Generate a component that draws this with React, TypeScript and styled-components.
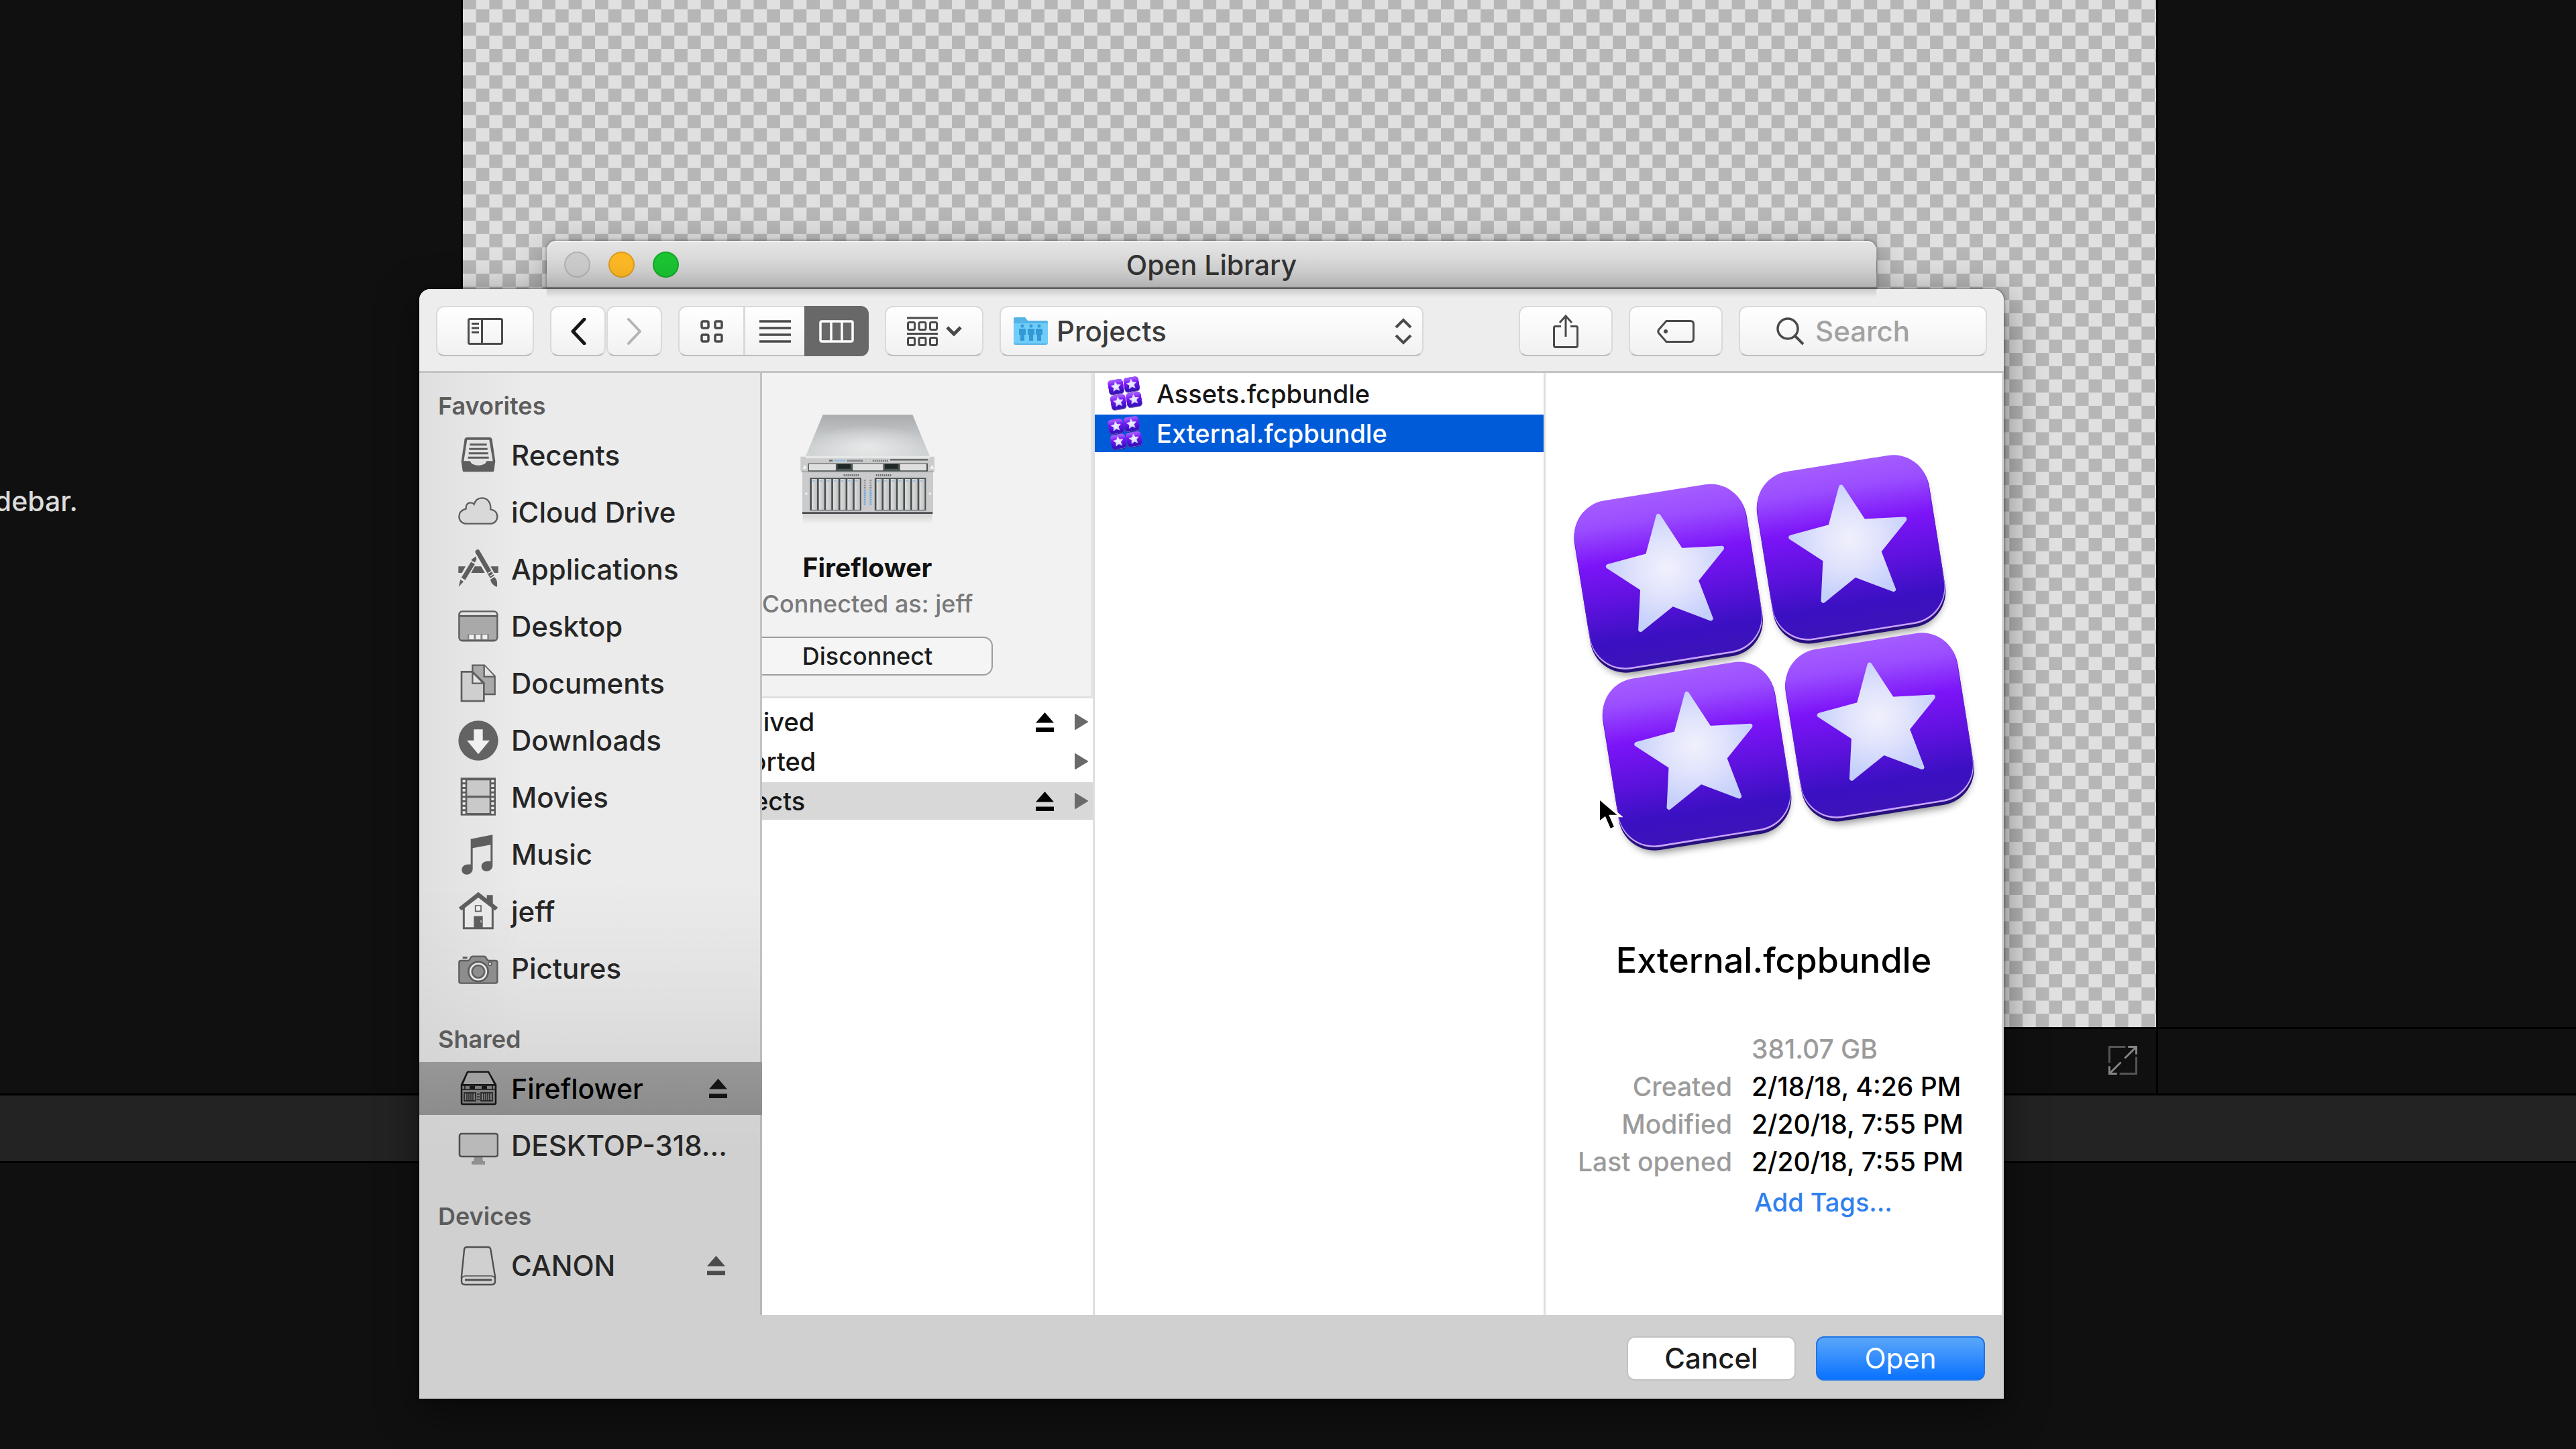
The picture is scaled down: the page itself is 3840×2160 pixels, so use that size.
import React from "react";
import styled, { createGlobalStyle, css } from "styled-components";

const GlobalStyle = createGlobalStyle`
  * { box-sizing: border-box; }
  html, body { margin: 0; padding: 0; background: #101010; }
  body { font-family: Inter, "Liberation Sans", sans-serif; color: #1c1c1c; overflow: hidden; }
  button, input, select { font: inherit; color: inherit; margin: 0; }
  ul, dl, dd, h1, h2, h3, p { margin: 0; padding: 0; }
  ul { list-style: none; }
  svg { display: block; flex: none; }
`;

/* ---------- Editor behind the dialog ---------- */

const Editor = styled.main`
  position: relative;
  display: grid;
  grid-template-columns: 690px 1fr 626px;
  grid-template-rows: 1fr 99px 101px 429px;
  height: 100vh;
  min-height: 2160px;
  overflow: hidden;
  background: #101010;
`;

const BrowserPane = styled.section`
  grid-row: 1 / 3;
  border-right: 3px solid #000;
  padding-top: 721px;
`;

const BrowserHint = styled.p`
  display: flex;
  justify-content: flex-end;
  width: 116px;
  overflow: hidden;
  white-space: nowrap;
  font-size: 41px;
  line-height: 52px;
  font-weight: 450;
  color: #dcdcdc;
`;

const Canvas = styled.section`
  min-width: 0;
  min-height: 0;
  overflow: hidden;
  background: #e0e0e0;
`;

const InspectorPane = styled.section`
  border-left: 3px solid #000;
`;

const ViewerBar = styled.div`
  grid-column: 2;
  display: flex;
  align-items: center;
  justify-content: flex-end;
  border-top: 3px solid #000;
  padding: 0 28px 4px 0;
`;

const InspectorBar = styled.div`
  border-top: 3px solid #000;
  border-left: 3px solid #000;
`;

const TimelineHeader = styled.div`
  grid-column: 1 / -1;
  border-top: 3px solid #000;
  background: #232323;
`;

const Timeline = styled.div`
  grid-column: 1 / -1;
  border-top: 3px solid #000;
`;

const BareButton = styled.button`
  display: flex;
  align-items: center;
  justify-content: center;
  padding: 0;
  border: 0;
  background: none;
`;

/* ---------- Dialog windows ---------- */

const DialogStack = styled.div`
  position: absolute;
  top: 359px;
  left: 625px;
  right: 853px;
  display: flex;
  flex-direction: column;
`;

const TitleBar = styled.header`
  display: grid;
  grid-template-columns: 1fr auto 1fr;
  align-items: center;
  height: 72px;
  margin: 0 190px;
  padding: 0 26px;
  border-radius: 14px 14px 0 0;
  border-top: 2px solid #f2f2f2;
  border-bottom: 3px solid #8c8c8c;
  background: linear-gradient(#e4e4e4, #cacaca);
  box-shadow: 0 0 4px rgba(0, 0, 0, 0.5), 0 10px 50px rgba(0, 0, 0, 0.3);
`;

const Lights = styled.div`
  display: flex;
  gap: 27px;
`;

const Light = styled.button<{ $fill: string; $edge: string }>`
  width: 39px;
  height: 39px;
  padding: 0;
  border: 2px solid ${(p) => p.$edge};
  border-radius: 50%;
  background: ${(p) => p.$fill};
`;

const Title = styled.h1`
  font-size: 41px;
  line-height: 52px;
  font-weight: 450;
  color: #333;
`;

const Sheet = styled.section`
  position: relative;
  border-radius: 16px 16px 0 0;
  background: #d0d0d0;
  box-shadow: 0 0 4px rgba(0, 0, 0, 0.6), 0 16px 60px rgba(0, 0, 0, 0.5);
`;

const Toolbar = styled.div`
  display: flex;
  align-items: center;
  gap: 24px;
  height: 125px;
  padding: 3px 25px 0;
  border-radius: 16px 16px 0 0;
  border-bottom: 3px solid #c4c4c4;
  background: linear-gradient(rgba(0, 0, 0, 0.14), rgba(0, 0, 0, 0)) 190px 0 / 1982px 13px no-repeat #ededed;
`;

const chrome = css`
  height: 75px;
  border: 2px solid #d9d9d9;
  border-bottom-color: #bdbdbd;
  border-radius: 12px;
  background: linear-gradient(#fff, #f1f1f1);
`;

const ToolButton = styled.button<{ $width: number }>`
  ${chrome}
  display: flex;
  align-items: center;
  justify-content: center;
  gap: 12px;
  width: ${(p) => p.$width}px;
  padding: 0;
`;

const NavGroup = styled.div`
  display: flex;
  gap: 1px;
`;

const ViewSwitch = styled.div`
  ${chrome}
  display: grid;
  grid-template-columns: 95px 91px 1fr;
  width: 284px;
  padding: 0;
`;

const ViewOption = styled(BareButton)<{ $active?: boolean }>`
  & + & { border-left: 3px solid #d9d9d9; }
  ${(p) =>
    p.$active &&
    css`
      && { border-left: 0; }
      margin: -2px -2px -2px 0;
      border-radius: 0 12px 12px 0;
      background: #686868;
    `}
`;

const FolderField = styled.label`
  ${chrome}
  display: grid;
  grid-template-columns: 51px 1fr 26px;
  align-items: center;
  gap: 13px;
  width: 632px;
  margin-right: auto;
  padding: 0 15px 0 19px;
`;

const FolderSelect = styled.select`
  appearance: none;
  height: 71px;
  padding: 0;
  border: 0;
  background: none;
  font-size: 42px;
  font-weight: 450;
  color: #3c3c3c;
`;

const SearchField = styled.label`
  ${chrome}
  display: flex;
  align-items: center;
  gap: 16px;
  width: 370px;
  padding-left: 54px;
`;

const SearchInput = styled.input`
  width: 100%;
  min-width: 0;
  height: 71px;
  padding: 0;
  border: 0;
  background: none;
  font-size: 42px;
  font-weight: 450;
  &::placeholder { color: #a2a2a2; opacity: 1; }
`;

/* ---------- Dialog body ---------- */

const Body = styled.div`
  display: grid;
  grid-template-columns: 511px 496px 672px 1fr;
`;

const Sidebar = styled.nav`
  padding-bottom: 34px;
  border-right: 3px solid rgba(0, 0, 0, 0.12);
  background:
    linear-gradient(
      rgba(208, 208, 208, 0) 54%,
      rgba(208, 208, 208, 0.3) 64%,
      rgba(208, 208, 208, 0.7) 74%,
      #d0d0d0 82%
    ),
    linear-gradient(90deg, rgba(0, 0, 0, 0.05), rgba(0, 0, 0, 0) 30%),
    #ebebeb;
`;

const SideSection = styled.section`
  & + & { margin-top: 17px; }
`;

const SideHeading = styled.h2`
  padding: 24px 28px 9px;
  font-size: 36px;
  line-height: 50px;
  font-weight: 600;
  color: #5c5c5c;
`;

const SideList = styled.ul`
  display: grid;
  gap: 6px;
`;

const SideRow = styled.li<{ $selected?: boolean }>`
  display: flex;
  align-items: center;
  height: 79px;
  padding: 0 52px 0 58px;
  background: ${(p) => (p.$selected ? "linear-gradient(#979797, #8c8c8c)" : "none")};
`;

const SideLink = styled.button<{ $strong?: boolean }>`
  display: flex;
  align-items: center;
  gap: 19px;
  flex: 1;
  padding: 0;
  border: 0;
  background: none;
  white-space: nowrap;
  text-align: left;
  font-size: ${(p) => (p.$strong ? 41 : 42)}px;
  line-height: 52px;
  font-weight: ${(p) => (p.$strong ? 500 : 450)};
  color: ${(p) => (p.$strong ? "#000" : "#262626")};
`;

const Column = styled.div`
  display: flex;
  justify-content: flex-end;
  overflow: hidden;
  border-right: 3px solid #dedede;
  background: #fff;
`;

const ColumnInner = styled.div`
  flex: 0 0 669px;
`;

const ServerCard = styled.div`
  display: flex;
  flex-direction: column;
  align-items: center;
  padding: 60px 0 31px;
  border-bottom: 3px solid #e0e0e0;
  border-right: 3px solid #e4e4e4;
  background: #f2f2f2;
`;

const ServerName = styled.h2`
  margin-top: 29px;
  font-size: 39px;
  line-height: 54px;
  font-weight: 700;
  color: #111;
`;

const ServerNote = styled.p`
  font-size: 36px;
  line-height: 54px;
  font-weight: 500;
  color: #7a7a7a;
`;

const DisconnectButton = styled.button`
  width: 373px;
  height: 58px;
  margin-top: 22px;
  padding: 0;
  border: 2px solid #9d9d9d;
  border-radius: 14px;
  background: #f5f5f5;
  font-size: 36px;
  font-weight: 500;
`;

const FileList = styled.ul<{ $top: number }>`
  display: grid;
  gap: 3px;
  padding-top: ${(p) => p.$top}px;
`;

const FileRow = styled.li<{ $tone?: "blue" | "grey" }>`
  display: flex;
  align-items: center;
  gap: 31px;
  height: 56px;
  padding: 0 7px 0 19px;
  background: ${(p) => (p.$tone === "blue" ? "#005bd9" : p.$tone === "grey" ? "#d8d8d8" : "none")};
  color: ${(p) => (p.$tone === "blue" ? "#fff" : "#161616")};
`;

const FileName = styled.button`
  display: flex;
  align-items: center;
  gap: 21px;
  flex: 1;
  padding: 0;
  border: 0;
  background: none;
  text-align: left;
  white-space: nowrap;
  font-size: 38px;
  line-height: 50px;
  font-weight: 500;
`;

const IconSlot = styled.span`
  width: 52px;
`;

const Preview = styled.aside`
  display: flex;
  flex-direction: column;
  align-items: center;
  padding-top: 120px;
  border-right: 3px solid #d4d4d4;
  background: #fff;
`;

const PreviewName = styled.h2`
  margin-top: 113px;
  font-size: 52px;
  line-height: 70px;
  font-weight: 450;
  color: #000;
`;

const Facts = styled.dl`
  display: grid;
  grid-template-columns: 278px 1fr;
  column-gap: 29px;
  width: 100%;
  margin-top: 69px;
  font-size: 39px;
  line-height: 56px;
  font-weight: 500;
`;

const FactLabel = styled.dt`
  text-align: right;
  color: #9b9b9b;
`;

const FactValue = styled.dd<{ $muted?: boolean }>`
  white-space: nowrap;
  color: ${(p) => (p.$muted ? "#9b9b9b" : "#000")};
`;

const TagLink = styled.a`
  padding-left: 4px;
  font-size: 38px;
  line-height: 64px;
  font-weight: 450;
  text-decoration: none;
  color: #2f80ee;
`;

const Footer = styled.footer`
  display: flex;
  justify-content: flex-end;
  gap: 30px;
  padding: 32px 28px 27px;
`;

const ActionButton = styled.button<{ $primary?: boolean }>`
  width: 252px;
  height: 66px;
  padding: 0;
  border: 2px solid ${(p) => (p.$primary ? "#1f74e8" : "#c2c2c2")};
  border-radius: 12px;
  background: ${(p) => (p.$primary ? "linear-gradient(#5aa7fa, #0a72ff)" : "#fff")};
  font-size: 42px;
  line-height: 56px;
  font-weight: ${(p) => (p.$primary ? 400 : 450)};
  color: ${(p) => (p.$primary ? "#fff" : "#1c1c1c")};
`;

const Pointer = styled.svg`
  position: absolute;
  left: 1756px;
  top: 755px;
`;

/* ---------- Drawings ---------- */

function Checkerboard() {
  return (
    <svg width="100%" height="100%" viewBox="0 0 1281 780" preserveAspectRatio="xMinYMax slice" aria-hidden="true">
      <defs>
        <pattern id="checks" width="20" height="20" patternUnits="userSpaceOnUse">
          <path d="M0 0H20V20H0Z" fill="#e0e0e0" />
          <path d="M0 0H10V10H0ZM10 10H20V20H10Z" fill="#b6b6b6" />
        </pattern>
      </defs>
      <rect width="1281" height="780" fill="url(#checks)" />
    </svg>
  );
}

const STAR =
  "M0-208 57.6-79.3 197.8-64.3 93.2 30.3 122.3 168.3 0 98 -122.3 168.3 -93.2 30.3 -197.8-64.3 -57.6-79.3Z";

function LibraryIcon({ size, id }: { size: number; id: string }) {
  const tiles = [
    [384, 503],
    [1013, 403],
    [482, 1115],
    [1111, 1015],
  ];
  return (
    <svg width={size} height={size} viewBox="46 82 1404 1404" aria-hidden="true">
      <defs>
        <linearGradient id={`${id}-tile`} x1="0" y1="0" x2="0" y2="1">
          <stop offset="0" stopColor="#a45cff" />
          <stop offset=".15" stopColor="#9a4dff" />
          <stop offset=".37" stopColor="#7c14f8" />
          <stop offset=".6" stopColor="#5f12df" />
          <stop offset=".84" stopColor="#3a10c2" />
          <stop offset="1" stopColor="#3c14b8" />
        </linearGradient>
        <linearGradient id={`${id}-rim`} x1="0" y1="0" x2="0" y2="1">
          <stop offset=".7" stopColor="#5d1ad8" />
          <stop offset=".85" stopColor="#c9a4ff" />
        </linearGradient>
        <linearGradient id={`${id}-side`} x1="0" y1="0" x2="0" y2="1">
          <stop offset=".3" stopColor="#9a60f0" />
          <stop offset=".8" stopColor="#26107c" />
        </linearGradient>
        <radialGradient id={`${id}-star`} cx=".5" cy=".48" r=".55">
          <stop offset="0" stopColor="#f1f1fc" />
          <stop offset=".5" stopColor="#dfe2fc" />
          <stop offset="1" stopColor="#c4cffb" />
        </radialGradient>
        <filter id={`${id}-shadow`} x="-20%" y="-20%" width="140%" height="150%">
          <feGaussianBlur stdDeviation="14" />
        </filter>
      </defs>
      {tiles.map(([x, y]) => (
        <g key={x} transform={`translate(${x} ${y}) rotate(-9.1)`}>
          <rect x="-290" y="-266" width="580" height="584" rx="124" opacity=".42" filter={`url(#${id}-shadow)`} />
          <rect x="-300" y="-278" width="600" height="586" rx="124" fill={`url(#${id}-side)`} />
          <rect x="-300" y="-286" width="600" height="583" rx="124" fill={`url(#${id}-rim)`} />
          <rect x="-298" y="-290" width="596" height="581" rx="122" fill={`url(#${id}-tile)`} />
          <path d={STAR} fill={`url(#${id}-star)`} stroke={`url(#${id}-star)`} strokeWidth="16" strokeLinejoin="round" />
        </g>
      ))}
    </svg>
  );
}

function ServerPicture() {
  const bays = [0, 1, 2, 3, 4, 5, 6];
  const holes = [0, 1, 2, 3, 4, 5, 6, 7];
  return (
    <svg width="203" height="174" viewBox="38 48 610 522" aria-hidden="true">
      <defs>
        <linearGradient id="srv-lid" x1="0" y1="0" x2="0" y2="1">
          <stop offset="0" stopColor="#a9abad" />
          <stop offset=".5" stopColor="#c3c6c8" />
          <stop offset="1" stopColor="#d3d6d6" />
        </linearGradient>
        <radialGradient id="srv-glow" cx=".5" cy=".75" r=".5">
          <stop offset="0" stopColor="#fff" stopOpacity=".55" />
          <stop offset="1" stopColor="#fff" stopOpacity="0" />
        </radialGradient>
        <linearGradient id="srv-bay" x1="0" y1="0" x2="1" y2="0">
          <stop offset="0" stopColor="#e0e0e0" />
          <stop offset="1" stopColor="#bfbfc1" />
        </linearGradient>
        <linearGradient id="srv-floor" x1="0" y1="0" x2="0" y2="1">
          <stop offset="0" stopColor="#000" stopOpacity=".14" />
          <stop offset="1" stopColor="#000" stopOpacity="0" />
        </linearGradient>
      </defs>
      <rect x="52" y="494" width="580" height="50" fill="url(#srv-floor)" />
      <path d="M142 54H544L622 242H64Z" fill="url(#srv-lid)" />
      <path d="M142 54H544L622 242H64Z" fill="url(#srv-glow)" />
      <path d="M42 242H642V306L636 312V492H50V312L42 306Z" fill="#cbcbcd" />
      <path d="M64 240H622V250H64Z" fill="#e6e8e8" />
      <path d="M50 490H634V498H50Z" fill="#4a4d50" />
      <path d="M48 310H638" stroke="#8b8d90" strokeWidth="4" />
      <path d="M444 256H612" stroke="#56605e" strokeWidth="7" />
      <path d="M170 260H186" stroke="#666" strokeWidth="7" />
      <path d="M192 260H244" stroke="#8fbbe0" strokeWidth="6" />
      {holes.map((n) => (
        <g key={n} fill="#686a6c">
          <rect x={252 + n * 9} y="256" width="5" height="9" />
          <rect x={365 + n * 9} y="256" width="5" height="9" />
          <rect x={235 + n * 9} y="321" width="5" height="9" />
          <rect x={380 + n * 9} y="321" width="5" height="9" />
        </g>
      ))}
      <circle cx="344" cy="260" r="6" fill="#e2e2e2" stroke="#a5a5a5" strokeWidth="2" />
      <circle cx="344" cy="326" r="6" fill="#e2e2e2" stroke="#a5a5a5" strokeWidth="2" />
      <rect x="76" y="272" width="536" height="36" fill="#4b5452" />
      <path d="M80 275H200V304H80ZM276 275H412V304H276ZM488 275H606V304H488Z" fill="#dededf" />
      <path d="M208 276H266V302H208ZM420 276H478V302H420Z" fill="#1d2827" />
      <path d="M208 296H266V302H208ZM420 296H478V302H420Z" fill="#55605e" />
      <path d="M52 296 60 278 70 296ZM622 296 632 278 640 296Z" fill="#f7f7f7" />
      <circle cx="68" cy="408" r="5" fill="#f3f3f3" />
      <circle cx="622" cy="408" r="5" fill="#f3f3f3" />
      {[84, 374].map((left) => (
        <g key={left}>
          <rect x={left} y="337" width="230" height="146" fill="#46504f" />
          {bays.map((n) => (
            <g key={n}>
              <rect x={left + 8 + n * 32} y="342" width="24" height="138" fill="url(#srv-bay)" />
              <rect x={left + 12 + n * 32} y="348" width="9" height="5" fill="#8abbe6" />
            </g>
          ))}
        </g>
      ))}
      <path d="M330 346V388M356 346V388" stroke="#7d8386" strokeWidth="9" strokeDasharray="4 4" />
      <path d="M330 392V462M356 392V462" stroke="#6aa5dd" strokeWidth="9" strokeDasharray="6 4" />
    </svg>
  );
}

const DARK = "#5e5e5e";

const sideIcons: Record<string, React.ReactNode> = {
  recents: (
    <svg width="60" height="60" viewBox="189 266 180 180">
      <path d="M226 275H333L340 280 355 382 349 424Q348 429 343 429H215Q210 429 209 424L203 382 218 280Z" fill={DARK} />
      <path d="M229 286H328L344 381H316C312 407 247 407 243 381H214Z" fill="#e3e3e3" />
      <path d="M241 307H317M238 327H320M236 346H323M233 366H326" stroke={DARK} strokeWidth="9" />
    </svg>
  ),
  cloud: (
    <svg width="60" height="60" viewBox="189 522 180 180">
      <path
        d="M226 662C205 662 193 647 193 629C193 612 204 601 224 595C222 576 234 567 245 568C251 568 257 571 260 575C266 556 280 547 295 547C320 547 336 567 334 598C352 600 364 613 364 630C364 648 351 662 332 662Z"
        fill="#d9d9d9" stroke={DARK} strokeWidth="7"
      />
    </svg>
  ),
  apps: (
    <svg width="60" height="60" viewBox="189 777 180 180">
      <path d="M190 853H222L206 882H190ZM334 853H368V882H350ZM263 853H292L308 882H247Z" fill={DARK} />
      <path d="M269 790 328 880" stroke="#ececec" strokeWidth="30" />
      <path d="M276 788 325 872" stroke={DARK} strokeWidth="21" strokeLinecap="round" />
      <path d="M328 878 342 901" stroke={DARK} strokeWidth="21" />
      <path d="M333 912 349 900C362 908 366 925 362 945C349 940 336 930 333 912Z" fill={DARK} />
      <path d="M269 808 248 823 250 833 263 836 271 822Z" fill={DARK} />
      <path d="M255 838 211 910" stroke={DARK} strokeWidth="20" />
      <path d="M199 912 213 921 191 944Z" fill={DARK} />
      <path d="M322 884 341 873M330 897 348 886M333 908 352 896M201 904 219 916M248 828 267 840" stroke="#ececec" strokeWidth="4" />
    </svg>
  ),
  desktop: (
    <svg width="60" height="60" viewBox="189 1032 180 180">
      <rect x="193" y="1054" width="171" height="131" rx="14" fill="#a9a9a9" stroke={DARK} strokeWidth="7" />
      <path d="M198 1070C198 1062 202 1058 210 1058H348C356 1058 360 1062 360 1070Z" fill="#e6e6e6" />
      <path d="M194 1075H364" stroke={DARK} strokeWidth="8" />
      <path d="M231 1181V1155H327V1181" fill={DARK} opacity=".45" />
      <path d="M238 1158H259V1179H238ZM268 1158H289V1179H268ZM298 1158H319V1179H298Z" fill="#f0f0f0" />
      <path d="M206 1185H352" stroke={DARK} strokeWidth="7" />
    </svg>
  ),
  documents: (
    <svg width="60" height="60" viewBox="189 1287 180 180">
      <path d="M253 1295H306L353 1344V1425H253Z" fill="#a9a9a9" stroke={DARK} strokeWidth="7" />
      <path d="M305 1296V1346H352" fill="#e4e4e4" stroke={DARK} strokeWidth="7" />
      <path d="M204 1324H253L304 1374V1455H204Z" fill="#cfcfcf" stroke={DARK} strokeWidth="8" />
      <path d="M253 1326V1376H302Z" fill="#e4e4e4" stroke={DARK} strokeWidth="7" />
    </svg>
  ),
  downloads: (
    <svg width="60" height="60" viewBox="189 71 180 180">
      <circle cx="279" cy="161" r="89" fill="#636363" />
      <path d="M259 111H299V160H330L279 222 228 160H259Z" fill="#f0f0f0" />
    </svg>
  ),
  movies: (
    <svg width="60" height="60" viewBox="189 326 180 180">
      <rect x="200" y="327" width="157" height="169" fill={DARK} />
      <path d="M229 339H329V407H229ZM229 417H329V485H229Z" fill="#c9c9c9" />
      <path d="M215 337V492M343 337V492" stroke="#ededed" strokeWidth="12" strokeDasharray="11 9" />
    </svg>
  ),
  music: (
    <svg width="60" height="60" viewBox="189 583 180 180">
      <path d="M245 603 343 584V722C343 737 331 747 317 747C303 747 293 739 293 726C293 709 310 699 334 703V629L254 644V737C254 752 242 762 228 762C214 762 205 753 205 741C205 724 221 713 245 717Z" fill={DARK} />
    </svg>
  ),
  home: (
    <svg width="60" height="60" viewBox="189 839 180 180">
      <path d="M214 908 279 858 343 908V1003H214Z" fill="#e9e9e9" stroke={DARK} strokeWidth="9" />
      <path d="M191 911 279 841 317 871V855H344V892L367 911 354 924 279 866 204 924Z" fill={DARK} />
      <path d="M266 902H291V927H266Z" fill="#f2f2f2" stroke={DARK} strokeWidth="5" />
      <path d="M259 949H299V1003H259Z" fill={DARK} />
      <path d="M291 968V978" stroke="#ddd" strokeWidth="4" />
    </svg>
  ),
  pictures: (
    <svg width="60" height="60" viewBox="189 1095 180 180">
      <path d="M209 1131H230V1140H209Z" fill={DARK} />
      <path d="M202 1149H233C244 1149 240 1130 254 1130H305C318 1130 314 1149 326 1149H356Q364 1149 364 1157V1242Q364 1250 356 1250H202Q193 1250 193 1242V1157Q193 1149 202 1149Z" fill="#8d8d8d" stroke={DARK} strokeWidth="7" />
      <circle cx="279" cy="1198" r="48" fill={DARK} />
      <circle cx="279" cy="1198" r="36" fill="#8d8d8d" stroke="#f0f0f0" strokeWidth="7" />
      <circle cx="279" cy="1198" r="27" fill="#8d8d8d" stroke={DARK} strokeWidth="6" />
      <circle cx="331" cy="1163" r="10" fill={DARK} />
      <circle cx="331" cy="1163" r="5" fill="#e4e4e4" />
    </svg>
  ),
  server: (
    <svg width="60" height="60" viewBox="0 0 60 60" fill="none" stroke="#161616" strokeWidth="2">
      <path d="M14 5H45L56 24V51Q56 53 54 53H7Q5 53 5 51V24Z" fill="#7d7d7d" strokeWidth="2.5" />
      <path d="M14 5H45L55 24H6Z" fill="#a0a0a0" />
      <path d="M5 25H56M5 31H56M10 25V31M51 25V31" strokeWidth="1.5" />
      <path d="M17 28H25M35 28H43" strokeWidth="4" />
      <path d="M9 36H26V48H9ZM34 36H51V48H34Z" strokeWidth="1.5" />
      <path d="M13 36V48M16 36V48M19 36V48M22 36V48M38 36V48M41 36V48M44 36V48M47 36V48" strokeWidth="1.3" />
      <path d="M29 37V49M31 37V49" strokeWidth="1.3" strokeDasharray="2 2" />
    </svg>
  ),
  monitor: (
    <svg width="60" height="60" viewBox="0 0 60 60">
      <path d="M24 46H36L37 53H40V58H20V53H23Z" fill="#909090" />
      <rect x="2" y="12" width="57" height="34" rx="3" fill="#b9b9b9" stroke="#505050" strokeWidth="2.6" />
    </svg>
  ),
  drive: (
    <svg width="60" height="60" viewBox="0 0 60 60" fill="none" stroke="#505050" strokeWidth="2.4">
      <path d="M13 2H44Q48 2 48.500 6L55 46V53Q55 58 50 58H10Q5 58 5 53V46L9 6Q9.500 2 13 2Z" />
      <path d="M5 50Q6 45 11 45H49Q54 45 55 50" strokeWidth="1.600" />
      <path d="M10 51H50" strokeWidth="3" />
    </svg>
  ),
};

function Eject({ color }: { color: string }) {
  return (
    <svg width="27" height="29" viewBox="0 0 27 29" fill={color} aria-hidden="true">
      <path d="M13.500 0 27 15.500H0ZM0 22.500H27V29H0Z" />
    </svg>
  );
}

function Disclosure() {
  return (
    <svg width="20" height="24" viewBox="0 0 20 24" aria-hidden="true">
      <path d="M1 1 19 12 1 23Z" fill="#6a6a6a" stroke="#6a6a6a" strokeWidth="2" strokeLinejoin="round" />
    </svg>
  );
}

const INK = "#4a4a4a";

/* ---------- Data ---------- */

type SideItem = { icon: string; label: string; eject?: string; selected?: boolean };

const sections: { title: string; items: SideItem[] }[] = [
  {
    title: "Favorites",
    items: [
      { icon: "recents", label: "Recents" },
      { icon: "cloud", label: "iCloud Drive" },
      { icon: "apps", label: "Applications" },
      { icon: "desktop", label: "Desktop" },
      { icon: "documents", label: "Documents" },
      { icon: "downloads", label: "Downloads" },
      { icon: "movies", label: "Movies" },
      { icon: "music", label: "Music" },
      { icon: "home", label: "jeff" },
      { icon: "pictures", label: "Pictures" },
    ],
  },
  {
    title: "Shared",
    items: [
      { icon: "server", label: "Fireflower", eject: "#141414", selected: true },
      { icon: "monitor", label: "DESKTOP-318…" },
    ],
  },
  { title: "Devices", items: [{ icon: "drive", label: "CANON", eject: "#4c4c4c" }] },
];

const volumes = [
  { name: "Archived", eject: true },
  { name: "Imported", eject: false },
  { name: "Projects", eject: true, open: true },
];

const facts = [
  { label: "", value: "381.07 GB", muted: true },
  { label: "Created", value: "2/18/18, 4:26 PM" },
  { label: "Modified", value: "2/20/18, 7:55 PM" },
  { label: "Last opened", value: "2/20/18, 7:55 PM" },
];

function DialogToolbar() {
  return (
    <Toolbar>
      <ToolButton $width={146} aria-label="Toggle sidebar">
        <svg width="53" height="40" viewBox="0 0 53 40" fill="none" stroke={INK}>
          <rect x="1.500" y="1.500" width="50" height="37" rx="2" strokeWidth="3" />
          <path d="M21.500 2V38" strokeWidth="3" />
          <path d="M6 8.500H17M6 15H17M6 21.500H17" strokeWidth="3" />
        </svg>
      </ToolButton>
      <NavGroup>
        <ToolButton $width={83} aria-label="Back">
          <svg width="24" height="40" viewBox="0 0 24 40" fill="none" stroke="#161616" strokeWidth="5">
            <path d="M21 2 4 20 21 38" strokeLinecap="round" strokeLinejoin="round" />
          </svg>
        </ToolButton>
        <ToolButton $width={83} aria-label="Forward">
          <svg width="24" height="40" viewBox="0 0 24 40" fill="none" stroke="#b4b4b4" strokeWidth="4">
            <path d="M3 2 20 20 3 38" strokeLinecap="round" strokeLinejoin="round" />
          </svg>
        </ToolButton>
      </NavGroup>
      <ViewSwitch>
        <ViewOption aria-label="Icon view">
          <svg width="34" height="34" viewBox="0 0 34 34" fill="none" stroke={INK} strokeWidth="3.500">
            <rect x="2" y="2" width="10" height="10" rx="2" />
            <rect x="22" y="2" width="10" height="10" rx="2" />
            <rect x="2" y="22" width="10" height="10" rx="2" />
            <rect x="22" y="22" width="10" height="10" rx="2" />
          </svg>
        </ViewOption>
        <ViewOption aria-label="List view">
          <svg width="47" height="34" viewBox="0 0 47 34" stroke={INK} strokeWidth="3.500">
            <path d="M0 2H47M0 12H47M0 22H47M0 32H47" />
          </svg>
        </ViewOption>
        <ViewOption $active aria-label="Column view" aria-pressed="true">
          <svg width="52" height="34" viewBox="0 0 52 34" fill="none" stroke="#fff" strokeWidth="3.500">
            <rect x="2" y="2" width="48" height="30" rx="2" />
            <path d="M18 2V32M34 2V32" />
          </svg>
        </ViewOption>
      </ViewSwitch>
      <ToolButton $width={147} aria-label="Group items">
        <svg width="46" height="44" viewBox="0 0 46 44" fill="none" stroke={INK} strokeWidth="3">
          <path d="M0 2H46M0 25.500H46" />
          <rect x="1.500" y="8.500" width="10" height="11" rx="2" />
          <rect x="18" y="8.500" width="10" height="11" rx="2" />
          <rect x="34.500" y="8.500" width="10" height="11" rx="2" />
          <rect x="1.500" y="31.500" width="10" height="11" rx="2" />
          <rect x="18" y="31.500" width="10" height="11" rx="2" />
          <rect x="34.500" y="31.500" width="10" height="11" rx="2" />
        </svg>
        <svg width="24" height="15" viewBox="0 0 24 15" fill="none" stroke={INK} strokeWidth="5">
          <path d="M2 2 12 12 22 2" />
        </svg>
      </ToolButton>
      <FolderField>
        <svg width="51" height="41" viewBox="0 0 51 41" aria-hidden="true">
          <path d="M0 2Q0 0 2 0H17L21 5H49Q51 5 51 7V38Q51 41 48 41H3Q0 41 0 38Z" fill="#55b4e6" />
          <path d="M0 9H51V37Q51 39 49 39H2Q0 39 0 37Z" fill="#70cdf8" />
          <g fill="#3399d6">
            {[13, 26, 38].map((x) => (
              <g key={x} transform={`translate(${x} 0)`}>
                <circle cx="0" cy="13" r="2.500" />
                <path d="M-5 17H5V26H3V35H-3V26H-5Z" />
              </g>
            ))}
          </g>
        </svg>
        <FolderSelect aria-label="Folder" defaultValue="Projects">
          <option>Projects</option>
        </FolderSelect>
        <svg width="26" height="40" viewBox="0 0 26 40" fill="none" stroke={INK} strokeWidth="4" aria-hidden="true">
          <path d="M2 14 13 3 24 14M2 26 13 37 24 26" />
        </svg>
      </FolderField>
      <ToolButton $width={140} aria-label="Share">
        <svg width="38" height="50" viewBox="0 0 38 50" fill="none" stroke={INK} strokeWidth="3">
          <path d="M12 17.500H3.500Q1.500 17.500 1.500 19.500V46Q1.500 48.500 4 48.500H34Q36.500 48.500 36.500 46V19.500Q36.500 17.500 34.500 17.500H26" />
          <path d="M19 33V2M10 12 19 2 28 12" />
        </svg>
      </ToolButton>
      <ToolButton $width={140} aria-label="Edit tags">
        <svg width="56" height="34" viewBox="0 0 56 34" fill="none" stroke={INK} strokeWidth="3">
          <path d="M14 1.500H50Q54.500 1.500 54.500 6V28Q54.500 32.500 50 32.500H14L3 20Q0.500 17 3 14Z" />
          <circle cx="13" cy="17" r="3" fill={INK} stroke="none" />
        </svg>
      </ToolButton>
      <SearchField>
        <svg width="42" height="42" viewBox="0 0 42 42" fill="none" stroke={INK} strokeWidth="3.500" aria-hidden="true">
          <circle cx="17" cy="17" r="15" />
          <path d="M28 28 40 40" strokeWidth="4" />
        </svg>
        <SearchInput type="search" placeholder="Search" aria-label="Search" />
      </SearchField>
    </Toolbar>
  );
}

export default function App() {
  return (
    <>
      <GlobalStyle />
      <Editor>
        <BrowserPane>
          <BrowserHint>sidebar.</BrowserHint>
        </BrowserPane>
        <Canvas>
          <Checkerboard />
        </Canvas>
        <InspectorPane />
        <ViewerBar>
          <BareButton aria-label="Play full screen">
            <svg width="43" height="43" viewBox="0 0 44 44" fill="none" stroke="#565656" strokeWidth="3">
              <path d="M26 1.500H1.500V26M42.500 17V42.500H17" />
              <path d="M30 1.500H42.500V13M42 2 25 19M1.500 31V42.500H13M2 42 19 25" stroke="#858585" />
            </svg>
          </BareButton>
        </ViewerBar>
        <InspectorBar />
        <TimelineHeader />
        <Timeline />

        <DialogStack role="dialog" aria-label="Open Library">
          <TitleBar>
            <Lights>
              <Light aria-label="Close" $fill="#cccccc" $edge="#b3b3b3" />
              <Light aria-label="Minimize" $fill="#fdb924" $edge="#dd9c1d" />
              <Light aria-label="Zoom" $fill="#1bc433" $edge="#17a82b" />
            </Lights>
            <Title>Open Library</Title>
          </TitleBar>
          <Sheet>
            <DialogToolbar />
            <Body>
              <Sidebar>
                {sections.map((section) => (
                  <SideSection key={section.title}>
                    <SideHeading>{section.title}</SideHeading>
                    <SideList>
                      {section.items.map((item) => (
                        <SideRow key={item.label} $selected={item.selected}>
                          <SideLink $strong={item.selected}>
                            {sideIcons[item.icon]}
                            {item.label}
                          </SideLink>
                          {item.eject && (
                            <BareButton aria-label={`Eject ${item.label}`}>
                              <Eject color={item.eject} />
                            </BareButton>
                          )}
                        </SideRow>
                      ))}
                    </SideList>
                  </SideSection>
                ))}
              </Sidebar>

              <Column>
                <ColumnInner>
                  <ServerCard>
                    <ServerPicture />
                    <ServerName>Fireflower</ServerName>
                    <ServerNote>Connected as: jeff</ServerNote>
                    <DisconnectButton>Disconnect</DisconnectButton>
                  </ServerCard>
                  <FileList $top={7}>
                    {volumes.map((v) => (
                      <FileRow key={v.name} $tone={v.open ? "grey" : undefined}>
                        <FileName>
                          <IconSlot />
                          {v.name}
                        </FileName>
                        {v.eject && (
                          <BareButton aria-label={`Eject ${v.name}`}>
                            <Eject color="#000" />
                          </BareButton>
                        )}
                        <Disclosure />
                      </FileRow>
                    ))}
                  </FileList>
                </ColumnInner>
              </Column>

              <Column>
                <ColumnInner>
                  <FileList $top={3}>
                    <FileRow>
                      <FileName>
                        <LibraryIcon size={52} id="assets" />
                        Assets.fcpbundle
                      </FileName>
                    </FileRow>
                    <FileRow $tone="blue">
                      <FileName>
                        <LibraryIcon size={52} id="external" />
                        External.fcpbundle
                      </FileName>
                    </FileRow>
                  </FileList>
                </ColumnInner>
              </Column>

              <Preview>
                <LibraryIcon size={608} id="preview" />
                <PreviewName>External.fcpbundle</PreviewName>
                <Facts>
                  {facts.map((f) => (
                    <React.Fragment key={f.label}>
                      <FactLabel>{f.label}</FactLabel>
                      <FactValue $muted={f.muted}>{f.value}</FactValue>
                    </React.Fragment>
                  ))}
                  <FactLabel />
                  <FactValue>
                    <TagLink href="#tags">Add Tags…</TagLink>
                  </FactValue>
                </Facts>
              </Preview>
            </Body>
            <Footer>
              <ActionButton>Cancel</ActionButton>
              <ActionButton $primary>Open</ActionButton>
            </Footer>
            <Pointer width="38" height="55" viewBox="142 1260 88 128" aria-hidden="true">
              <path
                d="M147 1268V1354L168 1338 186 1379 205 1370 188 1331H221Z"
                fill="#000" stroke="#fff" strokeWidth="8" strokeLinejoin="miter"
              />
            </Pointer>
          </Sheet>
        </DialogStack>
      </Editor>
    </>
  );
}
